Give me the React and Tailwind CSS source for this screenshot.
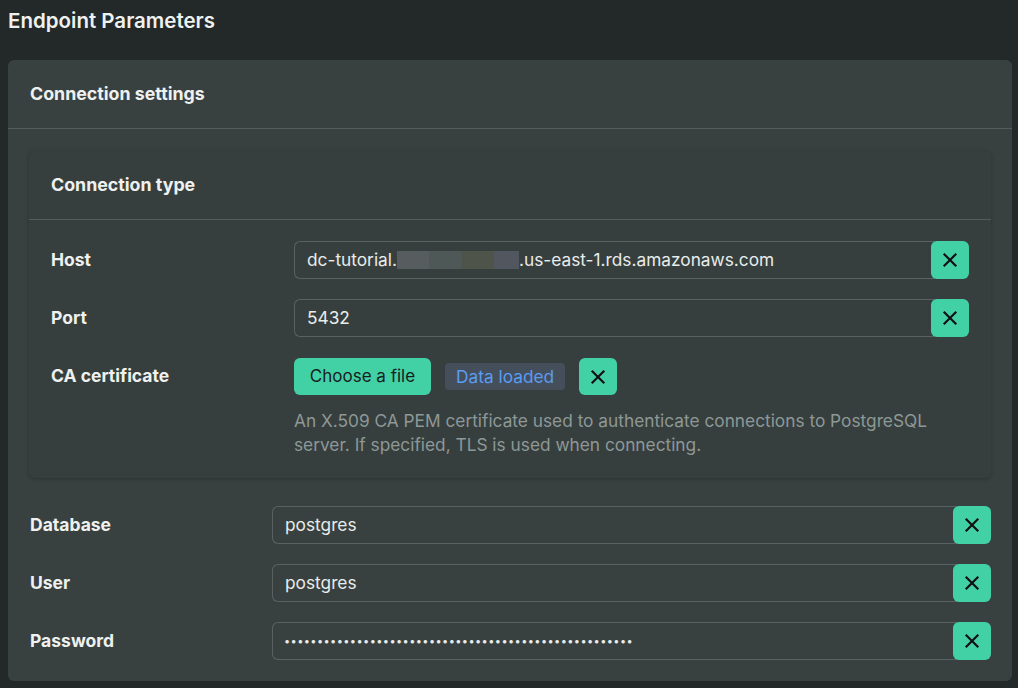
import React from "react";

const XIcon = () => (
  <svg width="16" height="16" viewBox="0 0 16 16" fill="none" stroke="#111" strokeWidth="2.2" strokeLinecap="square">
    <path d="M2.5 2.5 L13.5 13.5 M13.5 2.5 L2.5 13.5" />
  </svg>
);

function ClearBtn() {
  return (
    <button className="w-[38px] h-[38px] shrink-0 rounded-md bg-[#42d1a5] flex items-center justify-center -ml-1 relative">
      <XIcon />
    </button>
  );
}

function Field({ children }) {
  return (
    <div className="flex items-center flex-1">
      <div className="flex-1 h-[38px] border border-r-0 border-[#5a6261] rounded-l-md flex items-center pl-3 text-[17.3px] text-[#e8ecea] whitespace-nowrap overflow-hidden">
        {children}
      </div>
      <ClearBtn />
    </div>
  );
}

function Row({ label, labelW, children }) {
  return (
    <div className="flex items-center">
      <div className={`${labelW} shrink-0 text-[17.5px] font-bold text-[#eef1ef]`}>{label}</div>
      {children}
    </div>
  );
}

export default function App() {
  const dots = "•".repeat(53);
  return (
    <div className="w-[1018px] h-[688px] bg-[#222928] overflow-hidden" style={{ fontFamily: "Inter, 'Noto Sans', sans-serif" }}>
      <div className="h-[42px] flex items-center pl-[8px] text-[20.5px] font-semibold text-[#eef1ef]">Endpoint Parameters</div>
      <div className="pt-[18px] pl-[8px] pr-[6px]">
        <div className="bg-[#394140] rounded-md h-[621px]">
          <div className="h-[69px] flex items-center pl-[22px] text-[17.8px] font-bold text-[#eef1ef] border-b border-[#555d5c]">
            Connection settings
          </div>
          <div className="px-[21px] pt-[22px]">
            <div className="bg-[#373f3e] rounded-md shadow-[0_1px_4px_rgba(0,0,0,0.25)] h-[327px]">
              <div className="h-[69px] flex items-center pl-[22px] text-[17.8px] font-bold text-[#eef1ef] border-b border-[#555d5c]">
                Connection type
              </div>
              <div className="px-[22px] pt-[21px] flex flex-col">
                <Row label="Host" labelW="w-[243px]">
                  <Field>
                    <span>dc-tutorial.</span>
                    <span className="inline-flex h-[18px]">
                      <span className="w-[32px] bg-[#575c5e]" />
                      <span className="w-[33px] bg-[#4d5857]" />
                      <span className="w-[32px] bg-[#4e5449]" />
                      <span className="w-[25px] bg-[#52575f]" />
                    </span>
                    <span>.us-east-1.rds.amazonaws.com</span>
                  </Field>
                </Row>
                <div className="mt-[20px]">
                  <Row label="Port" labelW="w-[243px]">
                    <Field>5432</Field>
                  </Row>
                </div>
                <div className="flex items-start mt-[21px]">
                  <div className="w-[243px] shrink-0 text-[17.5px] font-bold text-[#eef1ef] h-[37px] flex items-center">CA certificate</div>
                  <div className="flex flex-col">
                    <div className="flex items-center">
                      <button className="h-[37px] w-[137px] rounded-md bg-[#42d1a5] text-[17px] text-[#17201e]">Choose a file</button>
                      <span className="ml-[14px] h-[27px] px-[11px] rounded bg-[#454f5c] text-[#5a9cf2] text-[17.3px] flex items-center">Data loaded</span>
                      <button className="ml-[14px] w-[38px] h-[37px] rounded-md bg-[#42d1a5] flex items-center justify-center"><XIcon /></button>
                    </div>
                    <p className="mt-[14px] text-[17.3px] leading-[24px] text-[#8d9897] w-[650px]">
                      An X.509 CA PEM certificate used to authenticate connections to PostgreSQL server. If specified, TLS is used when connecting.
                    </p>
                  </div>
                </div>
              </div>
            </div>
            <div className="pt-[28px] pl-[1px] flex flex-col gap-[20px]">
              <Row label="Database" labelW="w-[242px]"><Field>postgres</Field></Row>
              <Row label="User" labelW="w-[242px]"><Field>postgres</Field></Row>
              <Row label="Password" labelW="w-[242px]">
                <Field><span className="text-[11px] tracking-[0.4px] -ml-[1px]">{dots}</span></Field>
              </Row>
            </div>
          </div>
        </div>
      </div>
    </div>
  );
}
